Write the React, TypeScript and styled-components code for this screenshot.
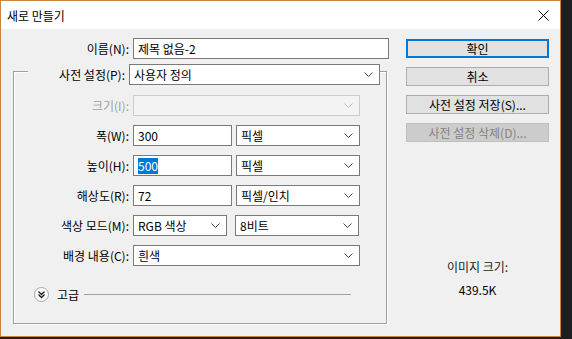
import styled, { createGlobalStyle } from 'styled-components';

const GlobalStyle = createGlobalStyle`
	html, body {
		margin: 0;
		padding: 0;
		background: #1e1e1e;
	}
	* {
		box-sizing: border-box;
	}
`;

const Window = styled.div`
	width: 561px;
	height: 337px;
	border: 1px solid #c8843f;
	background: #f0f0f0;
	display: flex;
	flex-direction: column;
	font-family: 'Noto Sans CJK KR', 'Noto Sans', sans-serif;
	font-size: 12px;
	color: #000;
`;

const TitleBar = styled.div`
	height: 28px;
	background: #fff;
	display: flex;
	align-items: center;
	justify-content: space-between;
	padding: 0 11px 0 6px;
	font-size: 12px;
`;

const Body = styled.div`
	flex: 1;
	display: flex;
	gap: 15px;
	padding: 9px 0 0 12px;
`;

const LeftCol = styled.div`
	width: 378px;
	display: flex;
	flex-direction: column;
`;

const RightCol = styled.div`
	width: 143px;
	padding-top: 1px;
	display: flex;
	flex-direction: column;
	gap: 9px;
`;

const Row = styled.div<{ $label?: number }>`
	display: grid;
	grid-template-columns: ${(p) => p.$label ?? 115}px 1fr;
	column-gap: 4px;
	align-items: center;
	height: 21px;
`;

const Label = styled.label<{ $disabled?: boolean }>`
	text-align: right;
	white-space: nowrap;
	line-height: 16px;
	color: ${(p) => (p.$disabled ? '#a0a0a0' : '#000')};
`;

const Field = styled.div<{ $w?: number; $disabled?: boolean }>`
	width: ${(p) => (p.$w ? `${p.$w}px` : '100%')};
	height: 21px;
	border: 1px solid ${(p) => (p.$disabled ? '#cccccc' : '#7a7a7a')};
	background: ${(p) => (p.$disabled ? '#f3f3f3' : '#fff')};
	display: flex;
	align-items: center;
	justify-content: space-between;
	padding: 0 6px 0 4px;
	line-height: 16px;
	white-space: nowrap;
`;

const Inputs = styled.div<{ $gap?: number }>`
	display: flex;
	gap: ${(p) => p.$gap ?? 4}px;
`;

const Selected = styled.span`
	background: #0078d7;
	color: #fff;
`;

const Group = styled.div`
	margin-top: 12px;
	width: 374px;
	height: 253px;
	border: 1px solid #a0a0a0;
	box-shadow: inset 1px 1px 0 #fff, 1px 1px 0 #fff;
	display: flex;
	flex-direction: column;
`;

const PresetRow = styled.div`
	margin: -9px 6px 0 14px;
	background: #f0f0f0;
	display: grid;
	grid-template-columns: 97px 1fr;
	column-gap: 4px;
	align-items: center;
	height: 23px;
`;

const Rows = styled.div`
	margin-top: 9px;
	display: flex;
	flex-direction: column;
	gap: 9px;
`;

const Advanced = styled.div`
	margin: 21px 35px 0 20px;
	display: flex;
	align-items: center;
	gap: 8px;
	height: 15px;
`;

const Rule = styled.div`
	flex: 1;
	height: 1px;
	background: #a0a0a0;
	margin-left: -3px;
`;

const Button = styled.div<{ $focused?: boolean; $disabled?: boolean }>`
	height: 19px;
	display: flex;
	align-items: center;
	justify-content: center;
	line-height: 16px;
	background: ${(p) => (p.$disabled ? '#cccccc' : '#e1e1e1')};
	color: ${(p) => (p.$disabled ? '#838383' : '#000')};
	border: ${(p) => (p.$focused ? '2px solid #0078d7' : `1px solid ${p.$disabled ? '#bfbfbf' : '#adadad'}`)};
`;

const Info = styled.div`
	margin-top: 108px;
	display: flex;
	flex-direction: column;
	align-items: center;
	gap: 7px;
	line-height: 16px;
`;

const InfoLabel = styled.div`
	color: #222;
`;

function Chevron({ disabled }: { disabled?: boolean }) {
	return (
		<svg width="9" height="5" viewBox="0 0 9 5">
			<polyline points="0.5,0.5 4.5,4.5 8.5,0.5" fill="none" stroke={disabled ? '#c0c0c0' : '#404040'} strokeWidth="1" />
		</svg>
	);
}

function Select({ value, w, disabled }: { value: string; w?: number; disabled?: boolean }) {
	return (
		<Field $w={w} $disabled={disabled}>
			<span>{value}</span>
			<Chevron disabled={disabled} />
		</Field>
	);
}

function CloseIcon() {
	return (
		<svg width="11" height="11" viewBox="0 0 11 11">
			<path d="M0.5 0.5 L10.5 10.5 M10.5 0.5 L0.5 10.5" stroke="#000" strokeWidth="1" />
		</svg>
	);
}

function ExpandIcon() {
	return (
		<svg width="15" height="15" viewBox="0 0 15 15">
			<circle cx="7.5" cy="7.5" r="7" fill="#fbfbfb" stroke="#a8a8a8" />
			<polyline points="4.5,4.5 7.5,7.5 10.5,4.5" fill="none" stroke="#222" strokeWidth="1.3" />
			<polyline points="4.5,7.5 7.5,10.5 10.5,7.5" fill="none" stroke="#222" strokeWidth="1.3" />
		</svg>
	);
}

function App(): JSX.Element {
	return (
		<>
			<GlobalStyle />
			<Window>
				<TitleBar>
					<span>새로 만들기</span>
					<CloseIcon />
				</TitleBar>
				<Body>
					<LeftCol>
						<Row $label={116}>
							<Label>이름(N):</Label>
							<Field $w={256}>제목 없음-2</Field>
						</Row>
						<Group>
							<PresetRow>
								<Label>사전 설정(P):</Label>
								<Select value="사용자 정의" />
							</PresetRow>
							<Rows>
								<Row>
									<Label $disabled>크기(I):</Label>
									<Select value="" w={227} disabled />
								</Row>
								<Row>
									<Label>폭(W):</Label>
									<Inputs>
										<Field $w={99}>300</Field>
										<Select value="픽셀" w={124} />
									</Inputs>
								</Row>
								<Row>
									<Label>높이(H):</Label>
									<Inputs>
										<Field $w={99}>
											<Selected>500</Selected>
										</Field>
										<Select value="픽셀" w={124} />
									</Inputs>
								</Row>
								<Row>
									<Label>해상도(R):</Label>
									<Inputs>
										<Field $w={99}>72</Field>
										<Select value="픽셀/인치" w={124} />
									</Inputs>
								</Row>
								<Row>
									<Label>색상 모드(M):</Label>
									<Inputs $gap={8}>
										<Select value="RGB 색상" w={94} />
										<Select value="8비트" w={124} />
									</Inputs>
								</Row>
								<Row>
									<Label>배경 내용(C):</Label>
									<Select value="흰색" w={227} />
								</Row>
							</Rows>
							<Advanced>
								<ExpandIcon />
								<span>고급</span>
								<Rule />
							</Advanced>
						</Group>
					</LeftCol>
					<RightCol>
						<Button $focused>확인</Button>
						<Button>취소</Button>
						<Button>사전 설정 저장(S)...</Button>
						<Button $disabled>사전 설정 삭제(D)...</Button>
						<Info>
							<InfoLabel>이미지 크기:</InfoLabel>
							<div>439.5K</div>
						</Info>
					</RightCol>
				</Body>
			</Window>
		</>
	);
}

export default App;
